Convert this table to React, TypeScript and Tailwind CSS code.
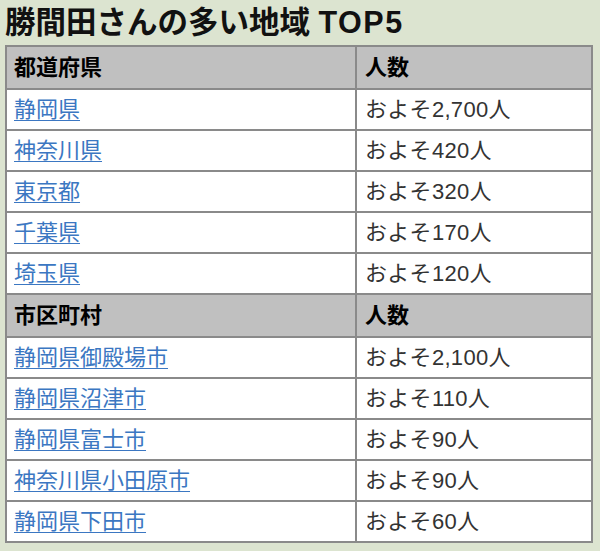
const prefectures = [
  { name: "静岡県", count: "およそ2,700人" },
  { name: "神奈川県", count: "およそ420人" },
  { name: "東京都", count: "およそ320人" },
  { name: "千葉県", count: "およそ170人" },
  { name: "埼玉県", count: "およそ120人" },
];

const cities = [
  { name: "静岡県御殿場市", count: "およそ2,100人" },
  { name: "静岡県沼津市", count: "およそ110人" },
  { name: "静岡県富士市", count: "およそ90人" },
  { name: "神奈川県小田原市", count: "およそ90人" },
  { name: "静岡県下田市", count: "およそ60人" },
];

const HeaderRow = ({ label }: { label: string }) => (
  <tr className="h-[43px] bg-[#c0c0c0]">
    <th className="border-2 border-[#8a8a8a] px-[7px] text-left font-bold text-black">{label}</th>
    <th className="border-2 border-[#8a8a8a] px-[8px] text-left font-bold text-black">人数</th>
  </tr>
);

const DataRow = ({ name, count }: { name: string; count: string }) => (
  <tr className="h-[41px] bg-white">
    <td className="border-2 border-[#8a8a8a] px-[7px]">
      <a href="#" className="text-[#3b77c2] underline underline-offset-[3px] decoration-1">
        {name}
      </a>
    </td>
    <td className="border-2 border-[#8a8a8a] px-[8px] tracking-[0.3px] text-[#333]">{count}</td>
  </tr>
);

export default function App() {
  return (
    <div
      className="min-h-[551px] w-[600px] bg-[#dce4d0] px-[5px] pt-[4px]"
      style={{ fontFamily: '"Liberation Sans", "Noto Sans CJK JP", sans-serif' }}
    >
      <h2 className="text-[30.5px] font-bold leading-[36px] text-[#111]">
        勝間田さんの多い地域 <span className="tracking-[1.5px]">TOP5</span>
      </h2>
      <table className="mt-[5px] w-[588px] border-collapse border-2 border-[#8a8a8a] text-[22px] leading-none">
        <colgroup>
          <col className="w-[350px]" />
          <col />
        </colgroup>
        <tbody>
          <HeaderRow label="都道府県" />
          {prefectures.map((p) => (
            <DataRow key={p.name} {...p} />
          ))}
          <HeaderRow label="市区町村" />
          {cities.map((c) => (
            <DataRow key={c.name} {...c} />
          ))}
        </tbody>
      </table>
    </div>
  );
}
